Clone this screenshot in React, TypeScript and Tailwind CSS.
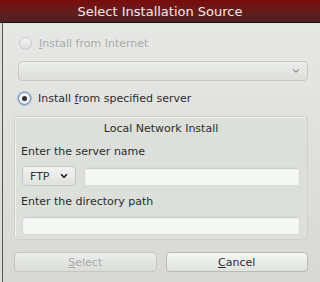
import { HiChevronDown } from "react-icons/hi";
import { ChevronDown } from "lucide-react";

const font = { fontFamily: '"DejaVu Sans", sans-serif' };

const Radio = ({ checked, disabled }: { checked?: boolean; disabled?: boolean }) => (
  <div
    className={
      "w-[13px] h-[13px] rounded-full flex items-center justify-center border " +
      (disabled
        ? "border-[#c8cac8] bg-gradient-to-b from-[#f4f4f4] to-[#dcdcdc]"
        : "border-[#6a86b0] bg-gradient-to-b from-[#ffffff] to-[#e4e6ea] shadow-[0_0_0_1px_#a9bedc]")
    }
  >
    {checked && <div className="w-[5px] h-[5px] rounded-full bg-[#333]" />}
  </div>
);

const TextField = ({ className }: { className: string }) => (
  <div
    className={
      "h-[19px] rounded-[3px] bg-[#f6f8f6] border border-[#d8dad8] shadow-[inset_0_1px_1px_#c8cac8] " +
      className
    }
  />
);

export default function App() {
  return (
    <div
      className="w-[320px] h-[282px] overflow-hidden flex flex-col bg-[#dcdcd8] text-[11px] leading-[13px] text-[#2c2c2c]"
      style={font}
    >
      <div className="h-[23px] shrink-0 bg-gradient-to-b from-[#7c0a0c] to-[#4e2222] border-b border-[#111] flex items-center justify-center text-[13px] text-[#f4e8ec]">
        Select Installation Source
      </div>
      <div className="flex-1 ml-[2px] border-l border-[#555] bg-gradient-to-b from-[#e6e8e6] to-[#d8d8d4] pl-[11px] pr-[12px]">
        <div className="mt-[14px] h-[13px] flex items-center gap-[7px] pl-[5px]">
          <Radio disabled />
          <span className="text-[#a8aaa8]">
            <span className="underline">I</span>nstall from Internet
          </span>
        </div>
        <div className="mt-[11px] ml-[4px] h-[20px] rounded-[4px] border border-[#c6c8c6] bg-gradient-to-b from-[#eceeec] to-[#dcdeda] flex items-center justify-end pr-[5px]">
          <HiChevronDown className="text-[#8a8c8a] text-[12px]" />
        </div>
        <div className="mt-[11px] h-[13px] flex items-center gap-[7px] pl-[4px]">
          <Radio checked />
          <span>
            Install <span className="underline">f</span>rom specified server
          </span>
        </div>
        <div className="mt-[11px] h-[124px] rounded-[3px] border border-[#cfd0cc] bg-[#dddfdb] shadow-[inset_1px_1px_0_#f0f2f0] px-[6px]">
          <div className="mt-[5px] text-center">Local Network Install</div>
          <div className="mt-[10px]">Enter the server name</div>
          <div className="mt-[8px] flex items-center gap-[8px] pl-[1px] pr-[1px]">
            <div className="w-[54px] h-[20px] rounded-[4px] border border-[#c4c6c4] bg-gradient-to-b from-[#f2f4f2] to-[#dfe1dd] flex items-center justify-between pl-[7px] pr-[6px] text-[#333]">
              <span>FTP</span>
              <ChevronDown size={10} strokeWidth={4} className="text-[#222]" />
            </div>
            <TextField className="flex-1" />
          </div>
          <div className="mt-[9px]">Enter the directory path</div>
          <div className="mt-[8px] pl-[1px] pr-[1px]">
            <TextField className="w-full" />
          </div>
        </div>
        <div className="mt-[12px] flex gap-[9px]">
          <div className="flex-1 h-[20px] rounded-[4px] border border-[#c4c6c4] bg-gradient-to-b from-[#eceeec] to-[#dadcd8] flex items-center justify-center text-[#a8aaa8]">
            <span>
              <span className="underline">S</span>elect
            </span>
          </div>
          <div className="flex-1 h-[20px] rounded-[4px] border border-[#b8bab8] bg-gradient-to-b from-[#f4f6f4] to-[#e0e2de] flex items-center justify-center">
            <span>
              <span className="underline">C</span>ancel
            </span>
          </div>
        </div>
      </div>
    </div>
  );
}
